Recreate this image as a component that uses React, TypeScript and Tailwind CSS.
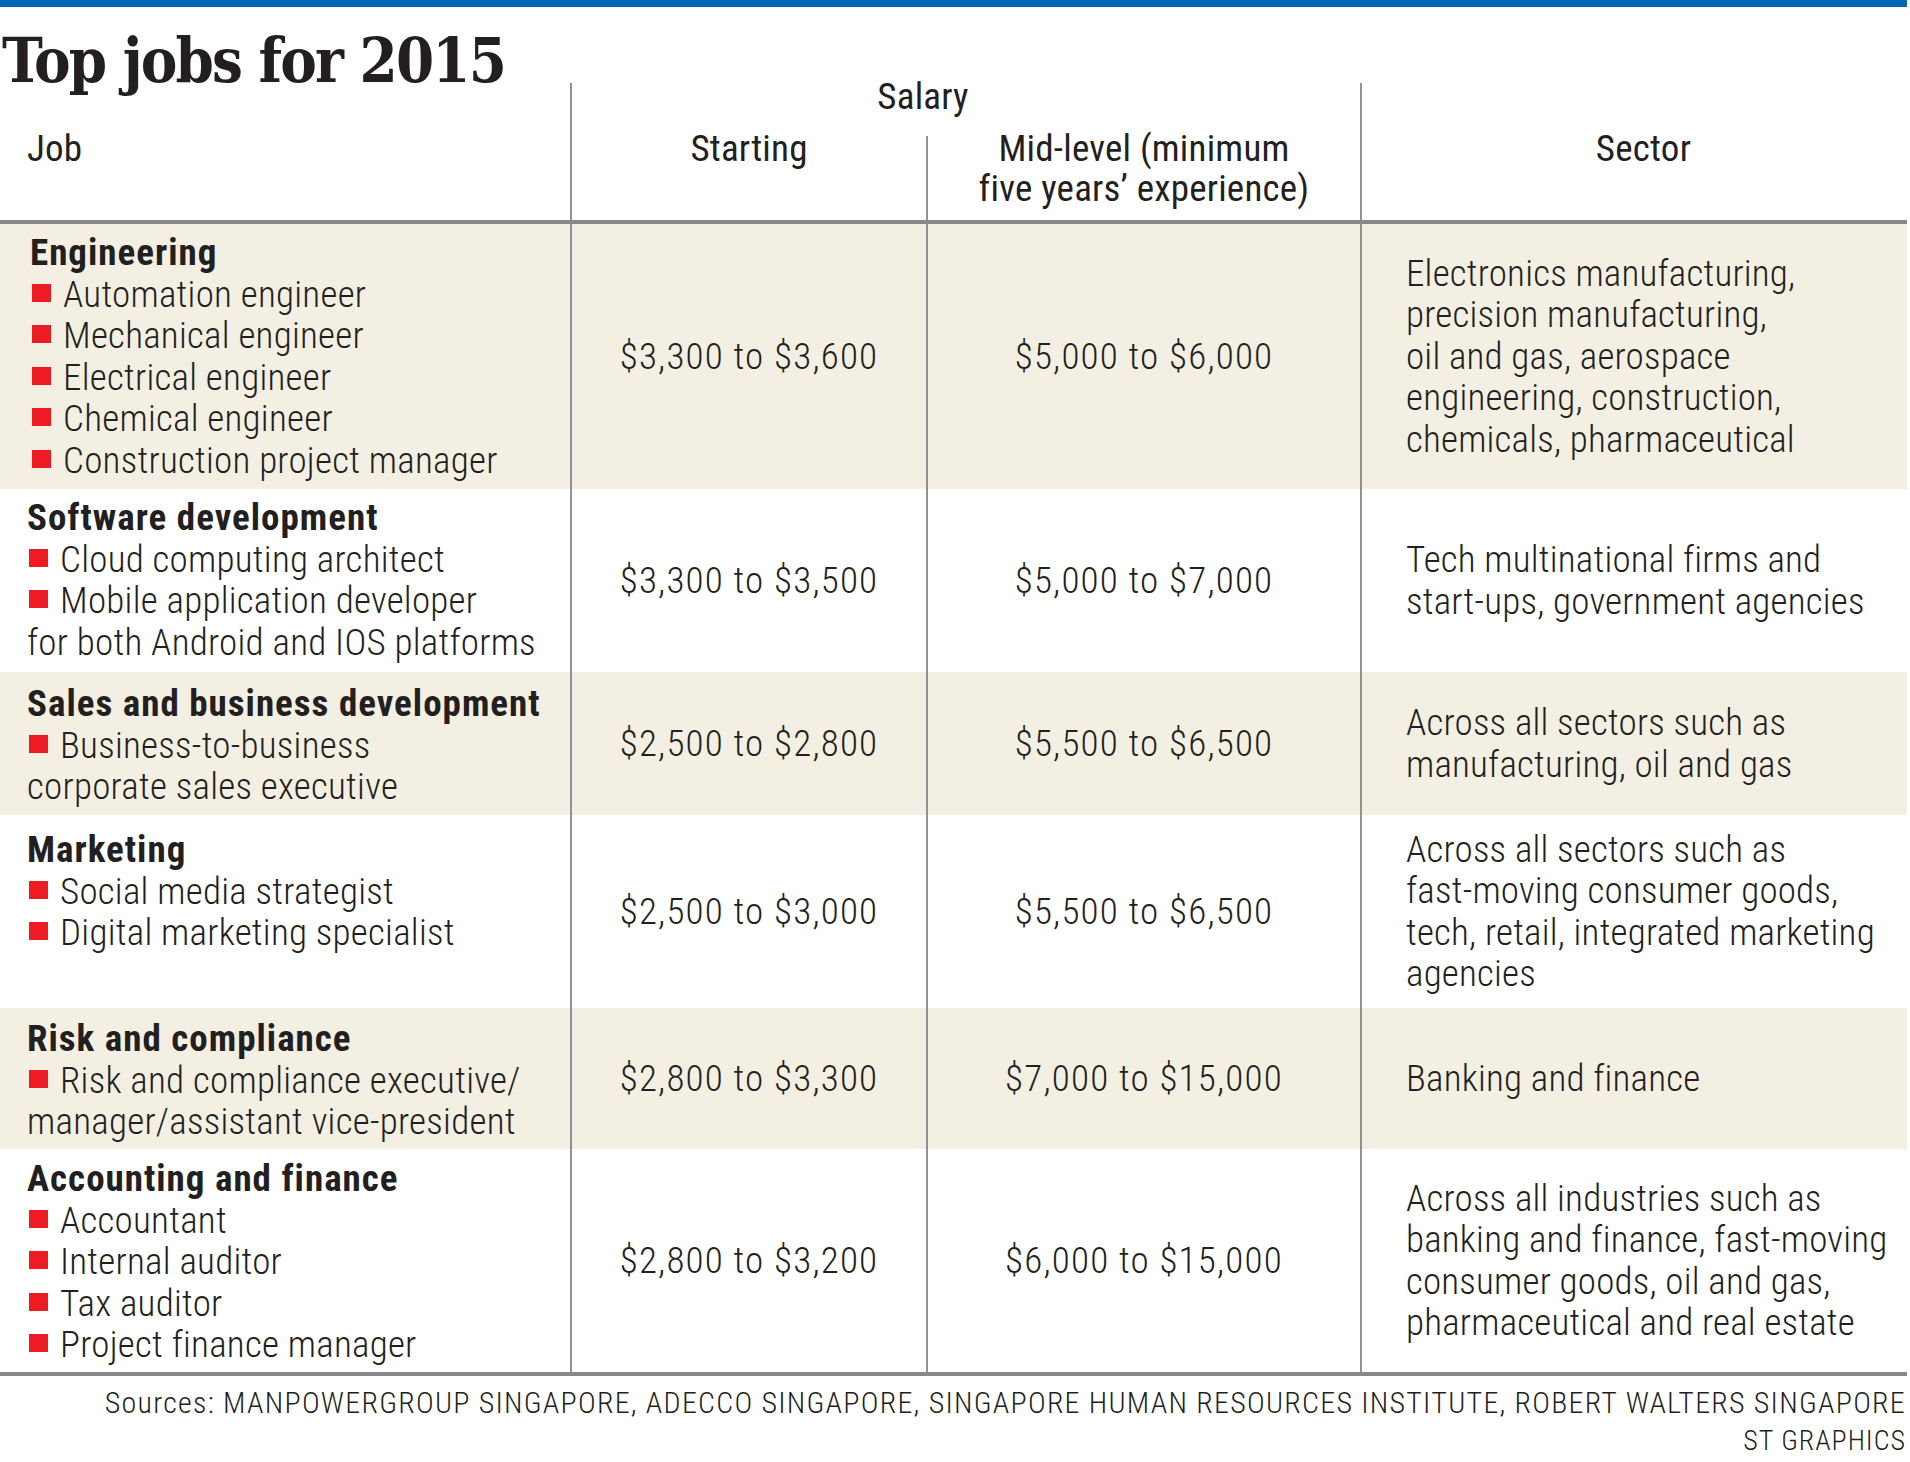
import React from 'react';

type Row = {
  title: string;
  items: string[][];
  start: string;
  mid: string;
  sector: string[];
  h: string;
  pt: string;
  indent: string;
  bg: string;
};

const rows: Row[] = [
  {
    title: 'Engineering',
    items: [
      ['Automation engineer'],
      ['Mechanical engineer'],
      ['Electrical engineer'],
      ['Chemical engineer'],
      ['Construction project manager'],
    ],
    start: '$3,300 to $3,600',
    mid: '$5,000 to $6,000',
    sector: [
      'Electronics manufacturing,',
      'precision manufacturing,',
      'oil and gas, aerospace',
      'engineering, construction,',
      'chemicals, pharmaceutical',
    ],
    h: 'h-[265px]',
    pt: 'pt-[8px]',
    indent: 'pl-[30px]',
    bg: 'bg-[#f3efe3]',
  },
  {
    title: 'Software development',
    items: [
      ['Cloud computing architect'],
      ['Mobile application developer', 'for both Android and IOS platforms'],
    ],
    start: '$3,300 to $3,500',
    mid: '$5,000 to $7,000',
    sector: ['Tech multinational firms and', 'start-ups, government agencies'],
    h: 'h-[183px]',
    pt: 'pt-[8px]',
    indent: 'pl-[27px]',
    bg: 'bg-white',
  },
  {
    title: 'Sales and business development',
    items: [['Business-to-business', 'corporate sales executive']],
    start: '$2,500 to $2,800',
    mid: '$5,500 to $6,500',
    sector: ['Across all sectors such as', 'manufacturing, oil and gas'],
    h: 'h-[143px]',
    pt: 'pt-[11px]',
    indent: 'pl-[27px]',
    bg: 'bg-[#f3efe3]',
  },
  {
    title: 'Marketing',
    items: [['Social media strategist'], ['Digital marketing specialist']],
    start: '$2,500 to $3,000',
    mid: '$5,500 to $6,500',
    sector: [
      'Across all sectors such as',
      'fast-moving consumer goods,',
      'tech, retail, integrated marketing',
      'agencies',
    ],
    h: 'h-[193px]',
    pt: 'pt-[14px]',
    indent: 'pl-[27px]',
    bg: 'bg-white',
  },
  {
    title: 'Risk and compliance',
    items: [['Risk and compliance executive/', 'manager/assistant vice-president']],
    start: '$2,800 to $3,300',
    mid: '$7,000 to $15,000',
    sector: ['Banking and finance'],
    h: 'h-[141px]',
    pt: 'pt-[10px]',
    indent: 'pl-[27px]',
    bg: 'bg-[#f3efe3]',
  },
  {
    title: 'Accounting and finance',
    items: [['Accountant'], ['Internal auditor'], ['Tax auditor'], ['Project finance manager']],
    start: '$2,800 to $3,200',
    mid: '$6,000 to $15,000',
    sector: [
      'Across all industries such as',
      'banking and finance, fast-moving',
      'consumer goods, oil and gas,',
      'pharmaceutical and real estate',
    ],
    h: 'h-[223px]',
    pt: 'pt-[9px]',
    indent: 'pl-[27px]',
    bg: 'bg-white',
  },
];

const Bullet = () => (
  <span className="inline-block w-[19px] h-[18px] bg-[#ed1c24] ml-[2px] mr-[12px] align-[5px]" />
);

const App = () => {
  return (
    <div className="w-[1907px] bg-white text-[#231f20] font-['Roboto_Condensed','Roboto',sans-serif] font-light text-[37px] tracking-[0.2px] whitespace-nowrap">
      <div className="h-[7px] bg-[#0066b3]" />
      <h1 className="h-[76px] pt-[23px] pl-[2px] leading-[62px] text-[61px] font-bold tracking-[-1.8px] font-['DejaVu_Serif_Condensed','DejaVu_Serif',serif] text-[#231f20]">
        Top jobs for 2015
      </h1>

      {/* header */}
      <div className="flex h-[137px] leading-[40px] font-normal">
        <div className="w-[570px] shrink-0 pl-[27px] pt-[46px]">Job</div>
        <div className="w-[790px] shrink-0 border-l-2 border-[#929292] flex flex-col">
          <div className="h-[53px] pr-[86px] text-center leading-[28px]">Salary</div>
          <div className="flex flex-1">
            <div className="w-[354px] shrink-0 text-center -mt-[7px]">Starting</div>
            <div className="flex-1 border-l-2 border-[#929292] text-center">
              <div className="-mt-[7px]">
                Mid-level (minimum
                <br />
                five years’ experience)
              </div>
            </div>
          </div>
        </div>
        <div className="flex-1 border-l-2 border-[#929292] text-center pt-[46px] pl-[18px]">Sector</div>
      </div>
      <div className="h-[4px] bg-[#898989]" />

      {/* rows */}
      {rows.map((r) => (
        <div key={r.title} className={`flex ${r.h} ${r.bg} leading-[41.5px]`}>
          <div className={`w-[570px] shrink-0 ${r.pt} ${r.indent} tracking-[0.25px]`}>
            <div className="font-bold tracking-[1px]">{r.title}</div>
            {r.items.map((item) => (
              <div key={item[0]}>
                <Bullet />
                {item[0]}
                {item.slice(1).map((l) => (
                  <React.Fragment key={l}>
                    <br />
                    {l}
                  </React.Fragment>
                ))}
              </div>
            ))}
          </div>
          <div className="w-[356px] shrink-0 border-l-2 border-[#929292] flex items-center justify-center tracking-[1.2px]">
            {r.start}
          </div>
          <div className="w-[434px] shrink-0 border-l-2 border-[#929292] flex items-center justify-center tracking-[1.2px]">
            {r.mid}
          </div>
          <div className="flex-1 border-l-2 border-[#929292] flex flex-col justify-center pl-[44px]">
            {r.sector.map((s) => (
              <div key={s}>{s}</div>
            ))}
          </div>
        </div>
      ))}
      <div className="h-[4px] bg-[#898989]" />

      {/* footer */}
      <div className="text-right leading-[38px] pt-[8px] pr-[1px]">
        <div className="text-[30px] tracking-[1.25px]">
          Sources: MANPOWERGROUP SINGAPORE, ADECCO SINGAPORE, SINGAPORE HUMAN RESOURCES INSTITUTE, ROBERT WALTERS
          SINGAPORE
        </div>
        <div className="text-[28px] tracking-[1px]">ST GRAPHICS</div>
      </div>
    </div>
  );
};

export default App;
